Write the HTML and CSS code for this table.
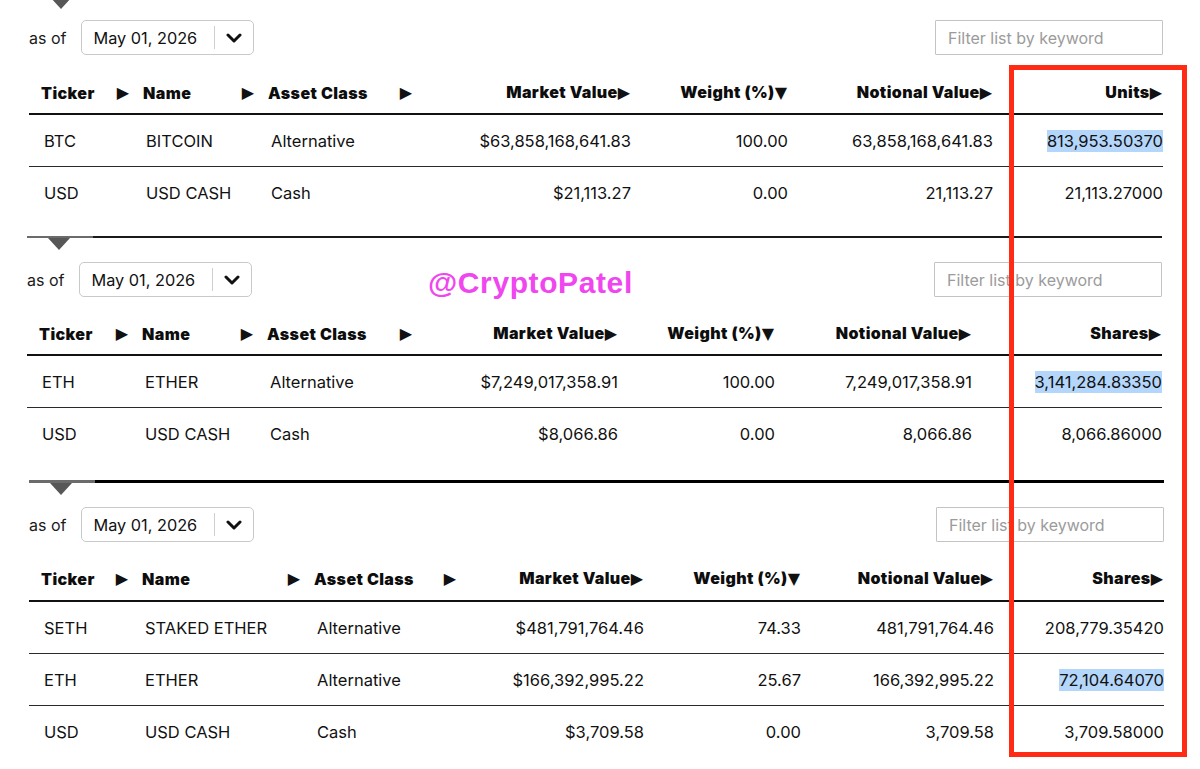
FILE: index.html
```html
<!DOCTYPE html>
<html lang="en">
<head>
<meta charset="utf-8">
<title>Holdings</title>
<link rel="stylesheet" href="styles.css">
</head>
<body>
<div class="page">

  <section class="holdings s1">
    <div class="rule"></div>
    <div class="toolbar">
      <div class="asof">
        <span class="asof-label">as of</span>
        <div class="datebox">
          <span class="date-text">May 01, 2026</span>
          <span class="divider"></span>
          <span class="chev"><svg width="16" height="10" viewBox="0 0 16 10"><path d="M2 2 L8 8 L14 2" fill="none" stroke="#111" stroke-width="3" stroke-linecap="round" stroke-linejoin="round"/></svg></span>
        </div>
      </div>
      <input class="filter" type="text" placeholder="Filter list by keyword">
    </div>
    <div class="table">
      <div class="row head">
        <div class="cell txt">Ticker<span class="arr">▶</span></div>
        <div class="cell txt">Name<span class="arr">▶</span></div>
        <div class="cell txt">Asset Class<span class="arr">▶</span></div>
        <div class="cell num">Market Value<span class="arr-n">▶</span></div>
        <div class="cell num">Weight (%)<span class="arr-n">▼</span></div>
        <div class="cell num">Notional Value<span class="arr-n">▶</span></div>
        <div class="cell num">Units<span class="arr-n">▶</span></div>
      </div>
      <div class="row">
        <div class="cell txt">BTC</div>
        <div class="cell txt">BITCOIN</div>
        <div class="cell txt">Alternative</div>
        <div class="cell num">$63,858,168,641.83</div>
        <div class="cell num">100.00</div>
        <div class="cell num">63,858,168,641.83</div>
        <div class="cell num"><span class="sel">813,953.50370</span></div>
      </div>
      <div class="row">
        <div class="cell txt">USD</div>
        <div class="cell txt">USD CASH</div>
        <div class="cell txt">Cash</div>
        <div class="cell num">$21,113.27</div>
        <div class="cell num">0.00</div>
        <div class="cell num">21,113.27</div>
        <div class="cell num">21,113.27000</div>
      </div>
    </div>
  </section>

  <section class="holdings s2">
    <div class="rule"></div>
    <div class="toolbar">
      <div class="asof">
        <span class="asof-label">as of</span>
        <div class="datebox">
          <span class="date-text">May 01, 2026</span>
          <span class="divider"></span>
          <span class="chev"><svg width="16" height="10" viewBox="0 0 16 10"><path d="M2 2 L8 8 L14 2" fill="none" stroke="#111" stroke-width="3" stroke-linecap="round" stroke-linejoin="round"/></svg></span>
        </div>
      </div>
      <input class="filter" type="text" placeholder="Filter list by keyword">
    </div>
    <div class="table">
      <div class="row head">
        <div class="cell txt">Ticker<span class="arr">▶</span></div>
        <div class="cell txt">Name<span class="arr">▶</span></div>
        <div class="cell txt">Asset Class<span class="arr">▶</span></div>
        <div class="cell num">Market Value<span class="arr-n">▶</span></div>
        <div class="cell num">Weight (%)<span class="arr-n">▼</span></div>
        <div class="cell num">Notional Value<span class="arr-n">▶</span></div>
        <div class="cell num">Shares<span class="arr-n">▶</span></div>
      </div>
      <div class="row">
        <div class="cell txt">ETH</div>
        <div class="cell txt">ETHER</div>
        <div class="cell txt">Alternative</div>
        <div class="cell num">$7,249,017,358.91</div>
        <div class="cell num">100.00</div>
        <div class="cell num">7,249,017,358.91</div>
        <div class="cell num"><span class="sel">3,141,284.83350</span></div>
      </div>
      <div class="row">
        <div class="cell txt">USD</div>
        <div class="cell txt">USD CASH</div>
        <div class="cell txt">Cash</div>
        <div class="cell num">$8,066.86</div>
        <div class="cell num">0.00</div>
        <div class="cell num">8,066.86</div>
        <div class="cell num">8,066.86000</div>
      </div>
    </div>
  </section>

  <section class="holdings s3">
    <div class="rule"></div>
    <div class="toolbar">
      <div class="asof">
        <span class="asof-label">as of</span>
        <div class="datebox">
          <span class="date-text">May 01, 2026</span>
          <span class="divider"></span>
          <span class="chev"><svg width="16" height="10" viewBox="0 0 16 10"><path d="M2 2 L8 8 L14 2" fill="none" stroke="#111" stroke-width="3" stroke-linecap="round" stroke-linejoin="round"/></svg></span>
        </div>
      </div>
      <input class="filter" type="text" placeholder="Filter list by keyword">
    </div>
    <div class="table">
      <div class="row head">
        <div class="cell txt">Ticker<span class="arr">▶</span></div>
        <div class="cell txt">Name<span class="arr">▶</span></div>
        <div class="cell txt">Asset Class<span class="arr">▶</span></div>
        <div class="cell num">Market Value<span class="arr-n">▶</span></div>
        <div class="cell num">Weight (%)<span class="arr-n">▼</span></div>
        <div class="cell num">Notional Value<span class="arr-n">▶</span></div>
        <div class="cell num">Shares<span class="arr-n">▶</span></div>
      </div>
      <div class="row">
        <div class="cell txt">SETH</div>
        <div class="cell txt">STAKED ETHER</div>
        <div class="cell txt">Alternative</div>
        <div class="cell num">$481,791,764.46</div>
        <div class="cell num">74.33</div>
        <div class="cell num">481,791,764.46</div>
        <div class="cell num">208,779.35420</div>
      </div>
      <div class="row">
        <div class="cell txt">ETH</div>
        <div class="cell txt">ETHER</div>
        <div class="cell txt">Alternative</div>
        <div class="cell num">$166,392,995.22</div>
        <div class="cell num">25.67</div>
        <div class="cell num">166,392,995.22</div>
        <div class="cell num"><span class="sel">72,104.64070</span></div>
      </div>
      <div class="row">
        <div class="cell txt">USD</div>
        <div class="cell txt">USD CASH</div>
        <div class="cell txt">Cash</div>
        <div class="cell num">$3,709.58</div>
        <div class="cell num">0.00</div>
        <div class="cell num">3,709.58</div>
        <div class="cell num">3,709.58000</div>
      </div>
    </div>
  </section>

  <div class="watermark">@CryptoPatel</div>
  <div class="highlight-box"></div>
</div>
</body>
</html>
```

FILE: styles.css
```css
* { box-sizing: border-box; }

html, body {
  margin: 0;
  padding: 0;
  background: #fff;
}

body {
  font-family: Inter, "Liberation Sans", Arial, sans-serif;
  font-size: 16px;
  color: #111;
  overflow: hidden;
}

.page {
  position: relative;
  width: 1200px;
  height: 769px;
  overflow: hidden;
}

.holdings {
  display: flex;
  flex-direction: column;
}

.s1 { margin-left: 29px; width: 1134px; margin-top: -5px; }
.s2 { margin-left: 27px; width: 1135px; margin-top: 17px; }
.s3 { margin-left: 29px; width: 1135px; margin-top: 20px; }

.s1 .table { --cols: 102px 125px 158px 217px 157px 205px 170px; }
.s2 .table { --cols: 103px 125px 159px 204px 157px 197px 190px; }
.s3 .table { --cols: 101px 172px 156px 186px 157px 193px 170px; }

/* tab rule with pointer */
.rule {
  position: relative;
  height: 2px;
  background: #1a1a1a;
}
.s3 .rule { height: 3px; background: #000; }
.rule::before {
  content: "";
  position: absolute;
  left: 0;
  top: 0;
  width: 66px;
  height: 100%;
  background: #6b6b6b;
}
.rule::after {
  content: "";
  position: absolute;
  left: 21px;
  top: 100%;
  width: 0;
  height: 0;
  border-left: 11px solid transparent;
  border-right: 11px solid transparent;
  border-top: 12px solid #575757;
}

/* toolbar */
.toolbar {
  display: flex;
  justify-content: space-between;
  align-items: center;
  margin-top: 24px;
  height: 35px;
}
.s1 .toolbar { margin-top: 23px; }

.asof {
  display: flex;
  align-items: center;
  gap: 15px;
}
.asof-label {
  font-size: 16px;
  color: #1a1a1a;
}
.datebox {
  display: flex;
  align-items: center;
  width: 173px;
  height: 35px;
  border: 1px solid #c9c9c9;
  border-radius: 5px;
  padding-left: 11px;
}
.date-text {
  flex: 1;
  font-size: 16.3px;
  color: #111;
  white-space: nowrap;
}
.divider {
  width: 1px;
  height: 23px;
  background: #cfcfcf;
}
.chev {
  width: 38px;
  display: flex;
  justify-content: center;
  align-items: center;
}
.chev svg { display: block; }

.filter {
  width: 228px;
  height: 35px;
  border: 1px solid #c4c4c4;
  border-radius: 1px;
  padding: 0 12px;
  font-family: Inter, "Liberation Sans", Arial, sans-serif;
  font-size: 16px;
  color: #111;
  background: #fff;
  outline: none;
}
.filter::placeholder { color: #9b9b9b; }

/* table */
.table {
  display: flex;
  flex-direction: column;
}
.row {
  display: grid;
  grid-template-columns: var(--cols);
  height: 52px;
  align-items: center;
  border-bottom: 1px solid #2a2a2a;
}
.row:last-child { border-bottom: none; }

.row.head {
  height: 60px;
  align-items: end;
  padding-bottom: 10px;
  border-bottom: 2px solid #111;
}
.s2 .row.head { height: 59px; padding-bottom: 10px; }
.s3 .row.head { padding-bottom: 11px; }

.cell {
  white-space: nowrap;
  font-size: 16.5px;
  line-height: 20px;
}
.cell.txt { padding-left: 15px; }
.cell.num { text-align: right; }

.head .cell {
  font-weight: 900;
  font-size: 16px;
  color: #0d0d0d;
  letter-spacing: 0.4px;
}
.head .cell.txt {
  padding-left: 12px;
  padding-right: 2px;
  display: flex;
  justify-content: space-between;
  align-items: center;
}
.head .cell.num {
  padding-right: 1px;
}
.arr, .arr-n {
  font-family: "DejaVu Sans", sans-serif;
  font-size: 16px;
  font-weight: normal;
  letter-spacing: 0;
  color: #111;
}

.sel {
  background: #b5d6fb;
  padding: 1px 0;
}

/* overlays */
.watermark {
  position: absolute;
  left: 428px;
  top: 266px;
  font-family: "Liberation Sans", Arial, sans-serif;
  font-weight: bold;
  font-size: 30px;
  line-height: 34px;
  letter-spacing: 0.6px;
  color: #f046ef;
}

.highlight-box {
  position: absolute;
  left: 1009px;
  top: 65px;
  width: 178px;
  height: 692px;
  border: 5px solid #ff2b14;
}
```
